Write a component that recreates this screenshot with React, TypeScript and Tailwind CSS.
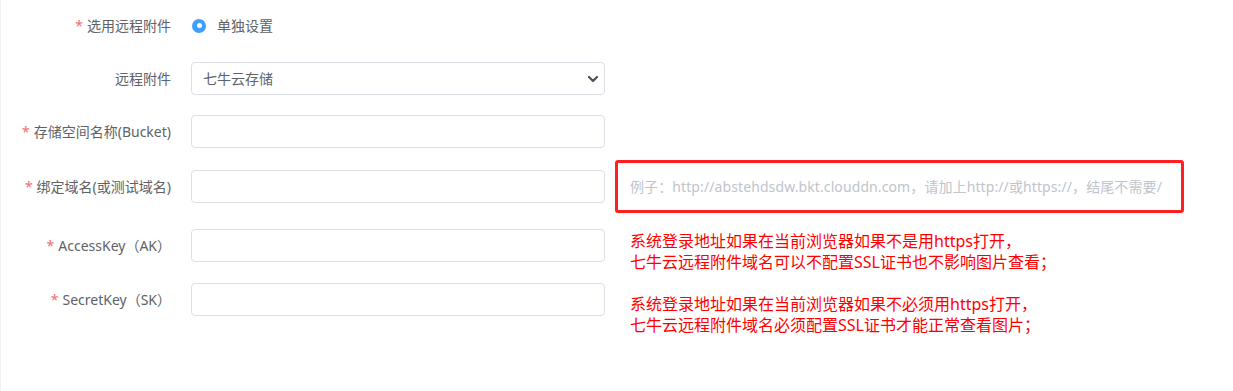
import React from "react";

const FONT = "font-['Noto_Sans','Noto_Sans_CJK_SC',sans-serif]";

function Label({ text, required }: { text: string; required?: boolean }) {
  return (
    <div className="w-[170px] shrink-0 text-right text-[14px] leading-[20px] text-[#606266]">
      {required && <span className="mr-[4px] text-[#f56c6c]">*</span>}
      {text}
    </div>
  );
}

function Input() {
  return (
    <div className="ml-[20px] h-[33px] w-[414px] shrink-0 rounded-[4px] border border-[#dcdfe6] bg-white" />
  );
}

export default function App() {
  return (
    <div className={`${FONT} h-[391px] w-[1233px] border-l border-[#eef0f3] bg-white`}>
      <div className="pt-[9px]">
        {/* Row 1 */}
        <div className="flex h-[33px] items-center">
          <Label text="选用远程附件" required />
          <div className="ml-[21px] flex items-center">
            <span className="flex h-[14px] w-[14px] items-center justify-center rounded-full bg-[#409eff]">
              <span className="h-[5px] w-[5px] rounded-full bg-white" />
            </span>
            <span className="ml-[11px] text-[14px] leading-[20px] text-[#606266]">单独设置</span>
          </div>
        </div>

        {/* Row 2 */}
        <div className="mt-[20px] flex h-[33px] items-center">
          <Label text="远程附件" />
          <div className="ml-[20px] flex h-[33px] w-[414px] shrink-0 items-center justify-between rounded-[4px] border border-[#dcdfe6] bg-white pl-[11px] pr-[4px]">
            <span className="text-[14px] leading-[20px] text-[#606266]">七牛云存储</span>
            <svg width="12" height="12" viewBox="0 0 12 12" className="mr-[1px]">
              <path d="M2 4 L6 8 L10 4" fill="none" stroke="#505050" strokeWidth="2.2" strokeLinecap="round" strokeLinejoin="round" />
            </svg>
          </div>
        </div>

        {/* Row 3 */}
        <div className="mt-[20px] flex h-[33px] items-center">
          <Label text="存储空间名称(Bucket)" required />
          <Input />
        </div>

        {/* Row 4 */}
        <div className="mt-[12px] flex h-[53px] items-center">
          <Label text="绑定域名(或测试域名)" required />
          <Input />
          <div className="ml-[10px] flex h-[53px] w-[569px] items-center rounded-[3px] border-[3px] border-[#ff1f1f] pl-[12px]">
            <span className="whitespace-nowrap text-[14px] leading-[20px] tracking-[0.1px] text-[#c0c4cc]">
              例子：http://abstehdsdw.bkt.clouddn.com，请加上http://或https://，结尾不需要/
            </span>
          </div>
        </div>

        {/* Rows 5 & 6 with note */}
        <div className="mt-[16px] flex">
          <div className="flex flex-col">
            <div className="flex h-[33px] items-center">
              <Label text="AccessKey（AK）" required />
              <Input />
            </div>
            <div className="mt-[21px] flex h-[33px] items-center">
              <Label text="SecretKey（SK）" required />
              <Input />
            </div>
          </div>
          <div className="ml-[25px] pt-[2px] text-[16px] leading-[21px] text-[#ff0000]">
            <div>系统登录地址如果在当前浏览器如果不是用https打开，</div>
            <div>七牛云远程附件域名可以不配置SSL证书也不影响图片查看；</div>
            <div className="h-[21px]" />
            <div>系统登录地址如果在当前浏览器如果不必须用https打开，</div>
            <div>七牛云远程附件域名必须配置SSL证书才能正常查看图片；</div>
          </div>
        </div>
      </div>
    </div>
  );
}
